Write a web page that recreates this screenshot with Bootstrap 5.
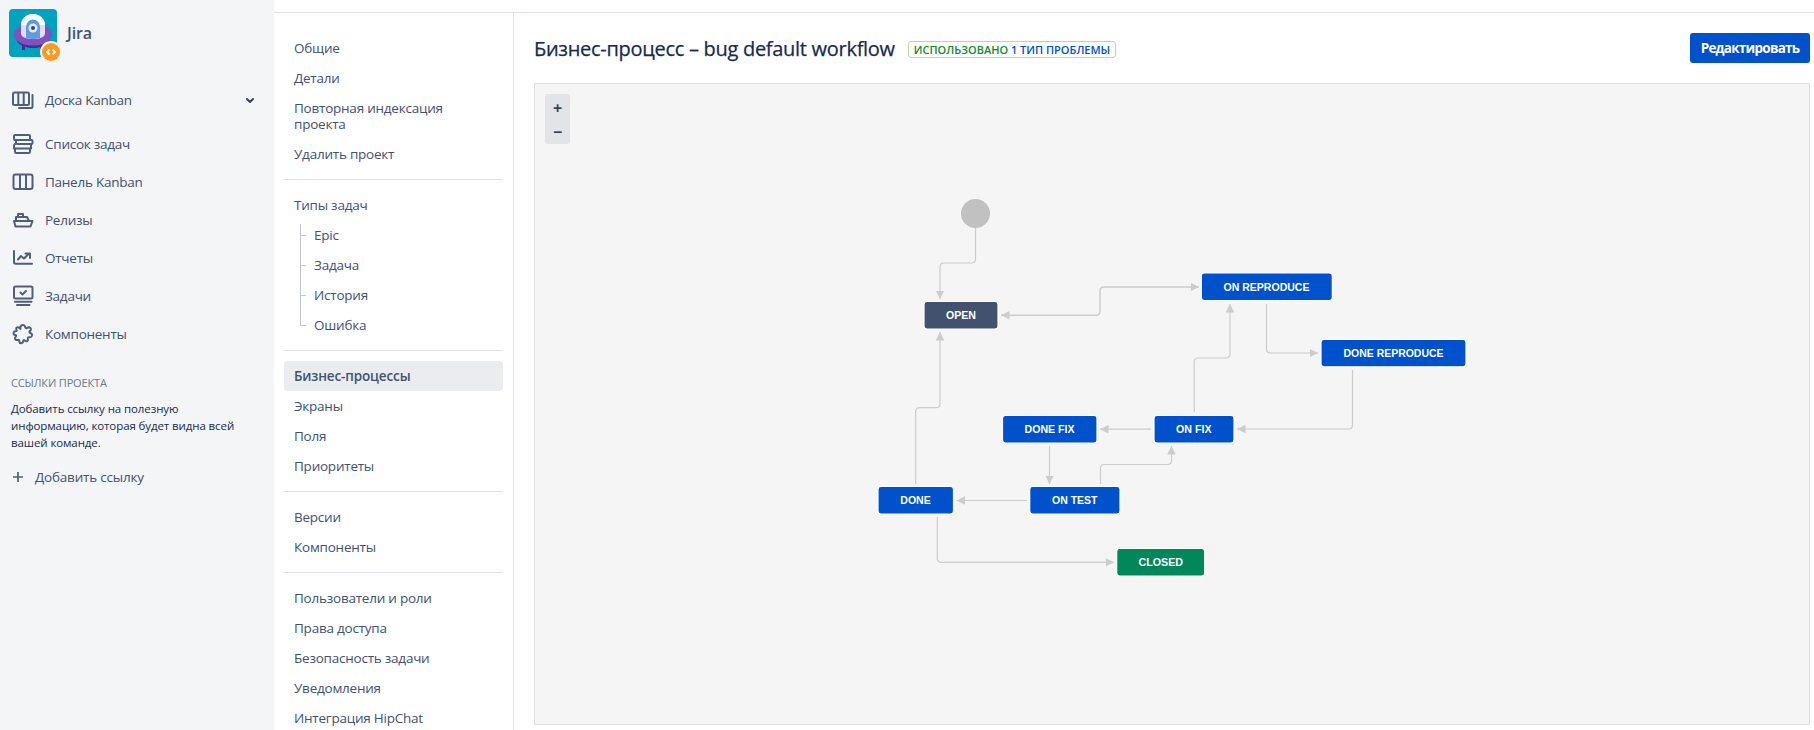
<!DOCTYPE html>
<html lang="ru">
<head>
<meta charset="utf-8">
<title>Jira</title>
<link href="https://cdn.jsdelivr.net/npm/bootstrap@5.3.0/dist/css/bootstrap.min.css" rel="stylesheet">
<style>
body{font-family:"Open Sans","Noto Sans",sans-serif;font-size:13.5px;line-height:16px;color:#42526e;background:#fff;height:730px;overflow:hidden}
.side{width:274px;background:#f4f5f7;flex:none}
.brand{height:81px;padding:9px 0 0 9px}
.brand svg{margin-right:-3px}
.brand-name{font-size:16px;font-weight:600;margin:14px 0 0 9px;line-height:20px;letter-spacing:-.1px}
.side .nav-link{height:38px;padding:0 16px 0 11px;color:#42526e;gap:10px;letter-spacing:-.25px}
.side .nav-link.board{margin-bottom:6px}
.side .nav-link svg{flex:none;width:24px;height:24px;fill:none;stroke:#505f79;stroke-width:2;stroke-linejoin:round;stroke-linecap:round}
.side .nav-link .chevron{margin-right:-4px;stroke:#344563}
.links{padding:22px 11px 0;font-size:12px}
.links h2{font-size:11px;line-height:16px;font-weight:500;color:#6b778c;margin:0 0 9px;letter-spacing:-.15px}
.links p{line-height:17px;color:#172b4d;margin:0;font-size:11.5px;letter-spacing:-.1px}
.links a{font-size:13.5px;color:#42526e;margin-top:18px;gap:11px;letter-spacing:-.2px}
.content{border-top:1px solid #dfe1e6;margin-top:12px}
.settings{width:240px;flex:none;border-right:1px solid #dfe1e6;padding:20px 10px 0}
.settings .nav-link{padding:7px 10px;color:#42526e;border-radius:3px;letter-spacing:-.23px}
.settings .active{background:#ebecf0;font-weight:600;letter-spacing:-.13px}
.settings hr{margin:10px 0;border-top:1px solid #dfe1e6;opacity:1}
.tree{padding-left:20px}
.tree .nav-link{position:relative}
.tree .nav-link::before{content:"";position:absolute;left:-4px;top:4px;height:30px;border-left:1px solid #c1c7d0}
.tree .nav-link::after{content:"";position:absolute;left:-4px;top:15px;width:6px;border-top:1px solid #c1c7d0}
.tree .nav-link:last-child::before{height:12px}
.main{padding:20px 4px 0 20px;min-width:0}
.main h1{font-size:20px;font-weight:500;line-height:24px;margin:2px 0 0;color:#172b4d;letter-spacing:-.29px;-webkit-text-stroke:.25px #172b4d}
.lozenge{border:1px solid #b2d8b9;border-radius:3px;font-size:11px;font-weight:600;line-height:15px;height:17px;padding:0 5px;color:#14892c;margin:3px 0 0 13px;white-space:nowrap}
.lozenge span{color:#0052cc}
.edit{height:30px;width:120px;padding:0;background:#0052cc;color:#fff;border:0;border-radius:3px;font-size:13.5px;font-weight:700;line-height:30px;letter-spacing:-.75px}
.canvas{margin-top:20px;height:642px;border:1px solid #e0e0e2;background:#f5f5f5;position:relative}
.canvas>svg{display:block;width:1274px;height:640px}
.zoomer{position:absolute;left:10px;top:10px;width:25px;height:50px;padding-top:2px;background:#e3e4e8;border-radius:3px}
.zoomer button{border:0;background:none;padding:0;height:24px;line-height:24px;font-weight:700;color:#344563;font-size:16px}
.edge{fill:none;stroke:#ccc;stroke-width:1.2}
.edge .both{stroke-width:1.5}
.state rect{stroke:#fff;stroke-width:1.2}
.state text{font:bold 10px "Liberation Sans",sans-serif;fill:#fff}
</style>
</head>
<body class="d-flex">
<aside class="side">
  <div class="brand d-flex align-items-start">
    <svg width="52" height="53" viewBox="0 0 52 53" class="flex-shrink-0">
      <rect width="48" height="48" rx="4" fill="#00a3bf"/>
      <path d="M13 33v8h3v-6zM34 33v7h-3v-5z" fill="#403294"/>
      <ellipse cx="24" cy="28.500" rx="17" ry="10.500" fill="#403294"/>
      <ellipse cx="24" cy="25.500" rx="19" ry="11" fill="#8450bd"/>
      <path d="M12 17a12 12 0 0 1 24 0v7c0 4-5 6-12 6s-12-2-12-6z" fill="#e6dcf5"/>
      <path d="M12 16a12 11 0 0 1 24 0z" fill="#fff"/>
      <path d="M17 18a7 7.500 0 0 1 14 0v11q-7 2-14 0z" fill="#5d9ddb"/>
      <circle cx="24" cy="19" r="4.500" fill="#deebff"/><circle cx="24" cy="19" r="2" fill="#344563"/>
      <circle cx="42" cy="43" r="11" fill="#f4f5f7"/><circle cx="42" cy="43" r="9" fill="#ff991f"/>
      <path d="M40.500 40.500 38 43l2.500 2.500M43.500 40.500 46 43l-2.500 2.500" fill="none" stroke="#fff" stroke-width="1.800"/>
    </svg>
    <div class="brand-name">Jira</div>
  </div>
  <nav class="nav flex-column">
    <a class="nav-link board d-flex align-items-center"><svg viewBox="0 0 24 24"><rect x="2" y="4.500" width="16" height="12.500" rx="1.500"/><path d="M7.300 5v12M12.700 5v12M21.500 7v12q0 1-1 1H8"/></svg><span class="flex-grow-1">Доска Kanban</span><svg class="chevron" viewBox="0 0 24 24"><path d="m9 11 3 3 3-3"/></svg></a>
    <a class="nav-link d-flex align-items-center"><svg viewBox="0 0 24 24"><rect x="3" y="3" width="16" height="5" rx="1"/><rect x="5" y="8" width="16.500" height="4" rx="1"/><path d="M4 12q-1 .5-1 2v2.500h17V12M4 16.500v3q0 1.500 1 1.500h13q1 0 1-1.500v-3"/></svg><span>Список задач</span></a>
    <a class="nav-link d-flex align-items-center"><svg viewBox="0 0 24 24"><rect x="2.500" y="4.500" width="19" height="14.500" rx="2"/><path d="M9 5v14M15 5v14"/></svg><span>Панель Kanban</span></a>
    <a class="nav-link d-flex align-items-center"><svg viewBox="0 0 24 24"><path d="M3 13h18.500l-2 5.500H4.500zM5 13V9h11l2 4M7 9V6h5v3"/></svg><span>Релизы</span></a>
    <a class="nav-link d-flex align-items-center"><svg viewBox="0 0 24 24"><path d="M3 5v11q0 1.800 1.800 1.800H21M7 13.500l3-3.500 3 2.500 5-5M14.500 7.500H19V12"/></svg><span>Отчеты</span></a>
    <a class="nav-link d-flex align-items-center"><svg viewBox="0 0 24 24"><rect x="3" y="2.500" width="18.500" height="12" rx="1.500"/><path d="m9.500 8.500 2 2 3.500-3.500M4 17.800h16.500M6 21h12.500"/></svg><span>Задачи</span></a>
    <a class="nav-link d-flex align-items-center"><svg viewBox="0 0 24 24"><path d="M9.500 6.500C8.500 3 13 1.500 14 4.500c.4 1.500.8 2 2 1.500l2-.8c1.200 0 2.500 1.800 1.800 2.800l-1.300 1.500c-.5 1 .3 1.300 1.200 1.600 2.300 1 1.500 4.300-1 4.200-1.500-.2-2.200.2-1.900 1.500.8 3-2.300 3-3.300 1.500-.8-.7-1.200.1-1.300 1-.5 2.600-3.700 2.300-3.900 0 0-1.300-.5-1.800-1.800-1.300-2.500.5-3.300-2-1.800-3.300.8-.8.600-1.500-.7-1.600-2.300-.8-1.800-3.800.6-3.800 1.400 0 1.400-.8.700-1.800-.8-2 1.700-3 2.800-1.700.9.800 1.600 1.400 1.400.7z"/></svg><span>Компоненты</span></a>
  </nav>
  <div class="links">
    <h2>ССЫЛКИ ПРОЕКТА</h2>
    <p>Добавить ссылку на полезную<br>информацию, которая будет видна всей<br>вашей команде.</p>
    <a class="d-flex align-items-center text-decoration-none"><svg width="13" height="12" viewBox="0 0 13 12"><path d="M7 1v10M2 6h10" stroke="#505f79" stroke-width="1.700"/></svg>Добавить ссылку</a>
  </div>
</aside>
<div class="content d-flex flex-grow-1">
  <nav class="settings nav flex-column flex-nowrap">
    <a class="nav-link">Общие</a>
    <a class="nav-link">Детали</a>
    <a class="nav-link">Повторная индексация<br>проекта</a>
    <a class="nav-link">Удалить проект</a>
    <hr>
    <a class="nav-link">Типы задач</a>
    <div class="tree">
      <a class="nav-link">Epic</a>
      <a class="nav-link">Задача</a>
      <a class="nav-link">История</a>
      <a class="nav-link">Ошибка</a>
    </div>
    <hr>
    <a class="nav-link active">Бизнес-процессы</a>
    <a class="nav-link">Экраны</a>
    <a class="nav-link">Поля</a>
    <a class="nav-link">Приоритеты</a>
    <hr>
    <a class="nav-link">Версии</a>
    <a class="nav-link">Компоненты</a>
    <hr>
    <a class="nav-link">Пользователи и роли</a>
    <a class="nav-link">Права доступа</a>
    <a class="nav-link">Безопасность задачи</a>
    <a class="nav-link">Уведомления</a>
    <a class="nav-link">Интеграция HipChat</a>
  </nav>
  <main class="main flex-grow-1">
    <div class="d-flex align-items-center">
      <h1>Бизнес-процесс – bug default workflow</h1>
      <span class="lozenge">ИСПОЛЬЗОВАНО <span>1 ТИП ПРОБЛЕМЫ</span></span>
      <button class="btn edit ms-auto">Редактировать</button>
    </div>
    <div class="canvas">
      <svg viewBox="535 84 1274 640">
        <defs><marker id="tip" viewBox="0 0 8 8" refX="8" refY="4" markerWidth="8.500" markerHeight="8.500" markerUnits="userSpaceOnUse" orient="auto-start-reverse"><path d="M0 0 8 4 0 8z" fill="#ccc"/></marker></defs>
        <circle cx="975.500" cy="213.500" r="14.500" fill="#c1c1c1"/>
        <g class="edge">
          <path marker-end="url(#tip)" d="M975.500 228v31q0 4-4 4H944q-4 0-4 4v32"/>
          <path class="both" marker-end="url(#tip)" marker-start="url(#tip)" d="M1001 315.300h95q4 0 4-4V291q0-4 4-4h95"/>
          <path marker-end="url(#tip)" d="M1266.500 304v45q0 4 4 4h47.500"/>
          <path marker-end="url(#tip)" d="M1352.500 370v55q0 4-4 4H1237"/>
          <path marker-end="url(#tip)" d="M1194.200 412v-50q0-4 4-4H1226q4 0 4-4v-50"/>
          <path marker-end="url(#tip)" d="M1151 429.200h-51"/>
          <path marker-end="url(#tip)" d="M1049.500 446v38"/>
          <path marker-end="url(#tip)" d="M1100.500 484v-15.500q0-4 4-4h63q4 0 4-4V446"/>
          <path marker-end="url(#tip)" d="M1027 500.500h-70.500"/>
          <path marker-end="url(#tip)" d="M915.700 484v-72.300q0-4 4-4H936q4 0 4-4V332"/>
          <path marker-end="url(#tip)" d="M937.300 517v41.300q0 4 4 4H1114"/>
        </g>
        <g class="state">
          <rect x="924" y="301.500" width="74" height="27.500" rx="3" fill="#42526e"/><text x="946" y="319" textLength="30" lengthAdjust="spacingAndGlyphs">OPEN</text>
          <rect x="1201.300" y="273" width="131" height="27.500" rx="3" fill="#0052cc"/><text x="1223.500" y="291" textLength="86" lengthAdjust="spacingAndGlyphs">ON REPRODUCE</text>
          <rect x="1321" y="339.300" width="145" height="27.500" rx="3" fill="#0052cc"/><text x="1343.500" y="357" textLength="100" lengthAdjust="spacingAndGlyphs">DONE REPRODUCE</text>
          <rect x="1154" y="415.500" width="80" height="27.500" rx="3" fill="#0052cc"/><text x="1176" y="433" textLength="35.500" lengthAdjust="spacingAndGlyphs">ON FIX</text>
          <rect x="1002.500" y="415.500" width="94.500" height="27.500" rx="3" fill="#0052cc"/><text x="1024.500" y="433" textLength="50" lengthAdjust="spacingAndGlyphs">DONE FIX</text>
          <rect x="878" y="486.500" width="75.500" height="27.500" rx="3" fill="#0052cc"/><text x="900.300" y="504" textLength="30.500" lengthAdjust="spacingAndGlyphs">DONE</text>
          <rect x="1029.700" y="486.500" width="90.300" height="27.500" rx="3" fill="#0052cc"/><text x="1052" y="504" textLength="45.500" lengthAdjust="spacingAndGlyphs">ON TEST</text>
          <rect x="1116.700" y="548.500" width="88" height="27.500" rx="3" fill="#00875a"/><text x="1138.500" y="566" textLength="44.500" lengthAdjust="spacingAndGlyphs">CLOSED</text>
        </g>
      </svg>
      <div class="zoomer d-flex flex-column"><button>+</button><button>−</button></div>
    </div>
  </main>
</div>
<script src="https://cdn.jsdelivr.net/npm/bootstrap@5.3.0/dist/js/bootstrap.bundle.min.js"></script>
</body>
</html>
